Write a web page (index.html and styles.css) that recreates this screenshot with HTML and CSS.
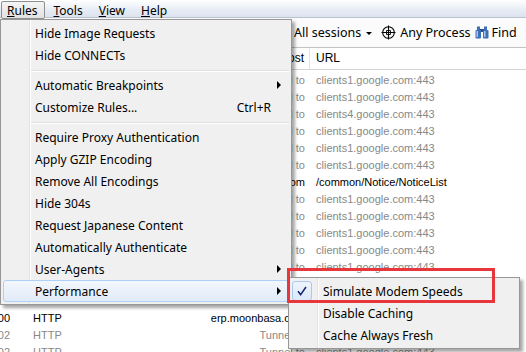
FILE: index.html
```html
<!DOCTYPE html>
<html>
<head>
    <title>Fiddler - Rules menu</title>
    <link rel="stylesheet" href="styles.css">
</head>
<body>
    <div class="window">
        <!-- Menu bar, Rules is open -->
        <div class="menubar">
            <span class="menubar-item is-open"><u>R</u>ules</span>
            <span class="menubar-item"><u>T</u>ools</span>
            <span class="menubar-item"><u>V</u>iew</span>
            <span class="menubar-item"><u>H</u>elp</span>
        </div>

        <!-- Toolbar -->
        <div class="toolbar">
            <div class="toolbar-hidden">Replay &nbsp; Go &nbsp; Stream &nbsp; Decode &nbsp; Keep:</div>
            <span class="tb-item"><span>All sessions</span></span>
            <span class="tb-caret"></span>
            <span class="tb-item tb-process">
                <svg class="tb-icon" width="15" height="15" viewBox="0 0 15 15">
                    <circle cx="7.5" cy="7.5" r="5.8" fill="none" stroke="#000" stroke-width="1.1"/>
                    <path d="M7.5 0.5V14.5M0.5 7.5H14.5" stroke="#000" stroke-width="1.1"/>
                    <path d="M5.5 5.5H9.5V9.5H5.5Z" fill="none" stroke="#000" stroke-width="0.9"/>
                </svg>
                <span>Any Process</span>
            </span>
            <span class="tb-item tb-find">
                <svg class="tb-icon" width="14" height="13" viewBox="0 0 14 13">
                    <rect x="2" y="0.5" width="3" height="4" fill="#3d6fb6"/>
                    <rect x="9" y="0.5" width="3" height="4" fill="#3d6fb6"/>
                    <rect x="5" y="3" width="4" height="3" fill="#2a4f8f"/>
                    <rect x="0.5" y="4" width="5.5" height="8.5" rx="1" fill="#3d6fb6"/>
                    <rect x="8" y="4" width="5.5" height="8.5" rx="1" fill="#3d6fb6"/>
                    <rect x="1.5" y="5" width="1.5" height="6" fill="#a9c6ee"/>
                    <rect x="9" y="5" width="1.5" height="6" fill="#a9c6ee"/>
                </svg>
                <span>Find</span>
            </span>
        </div>

        <!-- Session list -->
        <div class="sessions">
            <div class="row head">
                <span class="c-result"><span>Result</span></span>
                <span class="c-proto">Protocol</span>
                <span class="c-host">Host</span>
                <span class="c-url">URL</span>
            </div>
            <div class="list">
                <div class="row tunnel"><span class="c-result"><span>200</span></span><span class="c-proto">HTTP</span><span class="c-host">Tunnel to</span><span class="c-url">clients1.google.com:443</span></div>
                <div class="row tunnel"><span class="c-result"><span>200</span></span><span class="c-proto">HTTP</span><span class="c-host">Tunnel to</span><span class="c-url">clients1.google.com:443</span></div>
                <div class="row tunnel"><span class="c-result"><span>200</span></span><span class="c-proto">HTTP</span><span class="c-host">Tunnel to</span><span class="c-url">clients4.google.com:443</span></div>
                <div class="row tunnel"><span class="c-result"><span>200</span></span><span class="c-proto">HTTP</span><span class="c-host">Tunnel to</span><span class="c-url">clients1.google.com:443</span></div>
                <div class="row tunnel"><span class="c-result"><span>200</span></span><span class="c-proto">HTTP</span><span class="c-host">Tunnel to</span><span class="c-url">clients1.google.com:443</span></div>
                <div class="row tunnel"><span class="c-result"><span>200</span></span><span class="c-proto">HTTP</span><span class="c-host">Tunnel to</span><span class="c-url">clients1.google.com:443</span></div>
                <div class="row"><span class="c-result"><span>200</span></span><span class="c-proto">HTTP</span><span class="c-host">erp.moonbasa.com</span><span class="c-url">/common/Notice/NoticeList</span></div>
                <div class="row tunnel"><span class="c-result"><span>200</span></span><span class="c-proto">HTTP</span><span class="c-host">Tunnel to</span><span class="c-url">clients1.google.com:443</span></div>
                <div class="row tunnel"><span class="c-result"><span>200</span></span><span class="c-proto">HTTP</span><span class="c-host">Tunnel to</span><span class="c-url">clients1.google.com:443</span></div>
                <div class="row tunnel"><span class="c-result"><span>200</span></span><span class="c-proto">HTTP</span><span class="c-host">Tunnel to</span><span class="c-url">clients1.google.com:443</span></div>
                <div class="row tunnel"><span class="c-result"><span>200</span></span><span class="c-proto">HTTP</span><span class="c-host">Tunnel to</span><span class="c-url">clients1.google.com:443</span></div>
                <div class="row tunnel"><span class="c-result"><span>200</span></span><span class="c-proto">HTTP</span><span class="c-host">Tunnel to</span><span class="c-url">clients1.google.com:443</span></div>
                <div class="row tunnel"><span class="c-result"><span>200</span></span><span class="c-proto">HTTP</span><span class="c-host">Tunnel to</span><span class="c-url">clients1.google.com:443</span></div>
                <div class="row tunnel"><span class="c-result"><span>200</span></span><span class="c-proto">HTTP</span><span class="c-host">Tunnel to</span><span class="c-url">clients1.google.com:443</span></div>
                <div class="row"><span class="c-result"><span>200</span></span><span class="c-proto">HTTP</span><span class="c-host">erp.moonbasa.com</span><span class="c-url">/common/Notice/NoticeCount</span></div>
                <div class="row tunnel"><span class="c-result"><span>502</span></span><span class="c-proto">HTTP</span><span class="c-host">Tunnel to</span><span class="c-url">clients1.google.com:443</span></div>
                <div class="row tunnel"><span class="c-result"><span>502</span></span><span class="c-proto">HTTP</span><span class="c-host">Tunnel to</span><span class="c-url">clients1.google.com:443</span></div>
            </div>
        </div>

        <!-- Rules dropdown -->
        <div class="menu rules-menu">
            <div class="menu-item">Hide Image Requests</div>
            <div class="menu-item">Hide CONNECTs</div>
            <div class="menu-sep"></div>
            <div class="menu-item">Automatic Breakpoints<span class="sub-arrow"></span></div>
            <div class="menu-item">Customize Rules...<span class="shortcut">Ctrl+R</span></div>
            <div class="menu-sep"></div>
            <div class="menu-item">Require Proxy Authentication</div>
            <div class="menu-item">Apply GZIP Encoding</div>
            <div class="menu-item">Remove All Encodings</div>
            <div class="menu-item">Hide 304s</div>
            <div class="menu-item">Request Japanese Content</div>
            <div class="menu-item">Automatically Authenticate</div>
            <div class="menu-item">User-Agents<span class="sub-arrow"></span></div>
            <div class="menu-item is-hot">Performance<span class="sub-arrow"></span></div>
        </div>

        <!-- Performance submenu -->
        <div class="menu perf-menu">
            <div class="menu-item">
                <span class="check">
                    <svg width="10" height="10" viewBox="0 0 10 10">
                        <path d="M1 5.2L3.6 8.6L9 1" fill="none" stroke="#1c2a78" stroke-width="1.6"/>
                    </svg>
                </span>
                Simulate Modem Speeds
            </div>
            <div class="menu-item">Disable Caching</div>
            <div class="menu-item">Cache Always Fresh</div>
        </div>

        <!-- Red annotation box -->
        <div class="callout"></div>
    </div>
</body>
</html>
```

FILE: styles.css
```css
body {
    margin: 0;
    padding: 0;
    background-color: #fff;
    font-family: "Noto Sans", "Open Sans", sans-serif;
    font-size: 12px;
    color: #000;
}

.window {
    position: relative;
    width: 526px;
    height: 352px;
    overflow: hidden;
}

/* Menu bar */
.menubar {
    display: flex;
    align-items: flex-start;
    height: 17px;
    padding-left: 1px;
    background: linear-gradient(#ffffff, #e6ecf5 60%, #dbe3ee);
    border-bottom: 1px solid #b9c2ce;
}

.menubar-item {
    box-sizing: border-box;
    height: 18px;
    margin-top: 1px;
    margin-right: 2px;
    padding: 0 6px;
    line-height: 17px;
    border: 1px solid transparent;
}

.menubar-item.is-open {
    padding: 0 6px 0 5px;
    border-color: #8e8f8f;
    border-radius: 2px;
    background: linear-gradient(#f4f4f4, #e2e2e2);
}

/* Toolbar */
.toolbar {
    display: flex;
    align-items: center;
    height: 29px;
    background-color: #fbfbfb;
    border-bottom: 1px solid #c2c2c2;
    font-size: 12.5px;
    white-space: nowrap;
}

.toolbar-hidden {
    flex: 0 0 294px;
    overflow: hidden;
    color: #444;
}

.tb-item {
    display: flex;
    flex-shrink: 0;
    align-items: center;
    gap: 4px;
    margin-right: 7px;
}

.tb-process {
    margin-right: 4px;
}

.tb-find {
    gap: 3px;
}

.tb-caret {
    flex-shrink: 0;
    width: 0;
    height: 0;
    border-left: 3px solid transparent;
    border-right: 3px solid transparent;
    border-top: 3px solid #000;
    margin: 2px 9px 0 -2px;
}

.tb-icon {
    display: block;
}

/* Session list */
.sessions {
    font-family: "Liberation Sans", Arial, sans-serif;
    font-size: 11px;
}

.row {
    display: grid;
    grid-template-columns: 12px 128px 170px 1fr;
    height: 17px;
    line-height: 17px;
    white-space: nowrap;
}

.row.head {
    height: 21px;
    line-height: 21px;
    border-bottom: 1px solid #d5d5d5;
    background-color: #fff;
    font-size: 12px;
}

.row.head .c-host {
    border-right: 1px solid #e3e3e3;
}

.list {
    padding-top: 2px;
}

.row.tunnel {
    color: #888;
}

.c-result {
    display: flex;
    justify-content: flex-end;
    overflow: hidden;
    padding-right: 2px;
}

.c-proto {
    padding-left: 21px;
}

.c-host {
    text-align: right;
    padding-right: 5px;
    overflow: hidden;
}

.c-url {
    padding-left: 6px;
}

/* Dropdown menus */
.menu {
    position: absolute;
    box-sizing: border-box;
    padding: 2px;
    border: 1px solid #979797;
    background-color: #f0f0f0;
    background-image: linear-gradient(to right, transparent 28px, #e2e3e3 28px, #e2e3e3 29px, #fff 29px, #fff 30px, transparent 30px);
    box-shadow: 3px 3px 3px rgba(0, 0, 0, 0.35);
    white-space: nowrap;
}

.rules-menu {
    left: 0;
    top: 19px;
    width: 292px;
}

.perf-menu {
    left: 288px;
    top: 277px;
    width: 232px;
}

.menu-item {
    display: flex;
    align-items: center;
    box-sizing: border-box;
    height: 22px;
    padding-left: 31px;
    padding-right: 7px;
    border: 1px solid transparent;
    border-radius: 3px;
}

.menu-item.is-hot {
    border-color: #aecff7;
    background: linear-gradient(#f3f7fd, #e1ebf8);
}

.menu-sep {
    height: 0;
    margin: 4px 0 2px 28px;
    border-top: 1px solid #e0e0e0;
    border-bottom: 1px solid #fff;
}

.shortcut {
    margin-left: auto;
    padding-right: 10px;
}

.sub-arrow {
    margin-left: auto;
    width: 0;
    height: 0;
    border-top: 4px solid transparent;
    border-bottom: 4px solid transparent;
    border-left: 4px solid #000;
}

.perf-menu .menu-item {
    position: relative;
}

.check {
    position: absolute;
    left: 0;
    top: 0;
    box-sizing: border-box;
    display: flex;
    align-items: center;
    justify-content: center;
    width: 20px;
    height: 20px;
    border: 1px solid #a9c9ef;
    border-radius: 3px;
    background: linear-gradient(#eef4fc, #dce8f7);
}

/* Annotation */
.callout {
    position: absolute;
    left: 287px;
    top: 268px;
    width: 208px;
    height: 35px;
    box-sizing: border-box;
    border: 3px solid #e8373c;
}
```
